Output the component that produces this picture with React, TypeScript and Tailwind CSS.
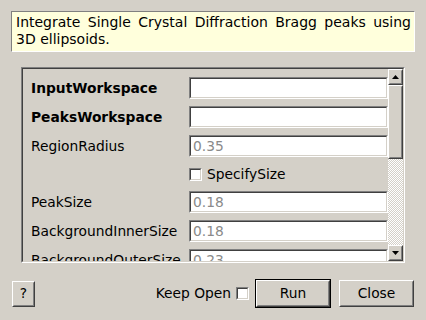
import type { ReactNode } from 'react'

const font = 'font-["DejaVu_Sans",sans-serif]'

function Sunken({ className = '', children }: { className?: string; children?: ReactNode }) {
  return (
    <div className={`border border-t-[#808080] border-l-[#808080] border-r-white border-b-white ${className}`}>
      <div className="h-full border border-t-[#404040] border-l-[#404040] border-r-[#d4d0c8] border-b-[#d4d0c8] bg-white">
        {children}
      </div>
    </div>
  )
}

function Raised({ className = '', children }: { className?: string; children?: ReactNode }) {
  return (
    <div className={`border border-t-white border-l-white border-r-[#404040] border-b-[#404040] ${className}`}>
      <div className="h-full flex items-center justify-center border border-t-[#d4d0c8] border-l-[#d4d0c8] border-r-[#808080] border-b-[#808080] bg-[#d4d0c8]">
        {children}
      </div>
    </div>
  )
}

function Field({ label, bold, value }: { label: string; bold?: boolean; value?: string }) {
  return (
    <div className="flex items-center h-[22px] shrink-0">
      <div className={`w-[166px] pl-2 text-[13.8px] text-black whitespace-nowrap ${bold ? 'font-bold' : ''}`}>{label}</div>
      <Sunken className="flex-1 h-[22px]">
        <div className="px-[2px] leading-[18px] text-[13.8px] text-[#8a8a8a]">{value}</div>
      </Sunken>
    </div>
  )
}

function Check({ className = '' }: { className?: string }) {
  return <Sunken className={`w-[13px] h-[13px] ${className}`} />
}

function Arrow({ up }: { up?: boolean }) {
  return (
    <svg width="7" height="4" viewBox="0 0 7 4">
      <path d={up ? 'M0 4 L3.5 0 L7 4 Z' : 'M0 0 L3.5 4 L7 0 Z'} fill="#000" />
    </svg>
  )
}

export default function App() {
  return (
    <div className={`w-[426px] h-[320px] bg-[#d4d0c8] relative overflow-hidden ${font}`}>
      <div className="pt-[11px] px-[11px]">
        <div className="w-[404px] h-[41px] border border-t-[#808080] border-l-[#808080] border-r-white border-b-white bg-[#ffffdc] pl-[4px] pr-[3px] pt-[2px] text-[14px] leading-[17px] text-black text-justify">
          Integrate Single Crystal Diffraction Bragg peaks using 3D ellipsoids.
        </div>
      </div>

      <div className="ml-[21px] mt-[15px] w-[384px] h-[196px] border border-t-[#808080] border-l-[#808080] border-r-white border-b-white">
        <div className="h-full flex border border-t-[#404040] border-l-[#404040] border-r-[#d4d0c8] border-b-[#d4d0c8]">
          <div className="flex-1 overflow-hidden pt-[8px] flex flex-col gap-[7px]">
            <Field label="InputWorkspace" bold />
            <Field label="PeaksWorkspace" bold />
            <Field label="RegionRadius" value="0.35" />
            <div className="flex items-center h-[20px] shrink-0 pl-[166px] gap-[5px] text-[13.8px] text-black">
              <Check />
              <span>SpecifySize</span>
            </div>
            <Field label="PeakSize" value="0.18" />
            <Field label="BackgroundInnerSize" value="0.18" />
            <Field label="BackgroundOuterSize" value="0.23" />
          </div>
          <div className="w-[15px] flex flex-col">
            <Raised className="h-[16px]"><Arrow up /></Raised>
            <Raised className="h-[74px]" />
            <div className="flex-1 bg-[conic-gradient(#ffffff_25%,#d4d0c8_0_50%,#ffffff_0_75%,#d4d0c8_0)] bg-[length:2px_2px]" />
            <Raised className="h-[16px]"><Arrow /></Raised>
          </div>
        </div>
      </div>

      <div className="flex items-center mt-[16px] px-[12px] h-[29px]">
        <Raised className="w-[23px] h-[26px]">
          <span className="text-[13.8px] text-black">?</span>
        </Raised>
        <div className="flex-1" />
        <span className="text-[13.8px] text-black">Keep Open</span>
        <Check className="ml-[5px]" />
        <div className="ml-[6px] border border-black">
          <Raised className="w-[74px] h-[27px]">
            <span className="text-[13.8px] text-black">Run</span>
          </Raised>
        </div>
        <Raised className="ml-[8px] w-[75px] h-[27px]">
          <span className="text-[13.8px] text-black">Close</span>
        </Raised>
      </div>
    </div>
  )
}
